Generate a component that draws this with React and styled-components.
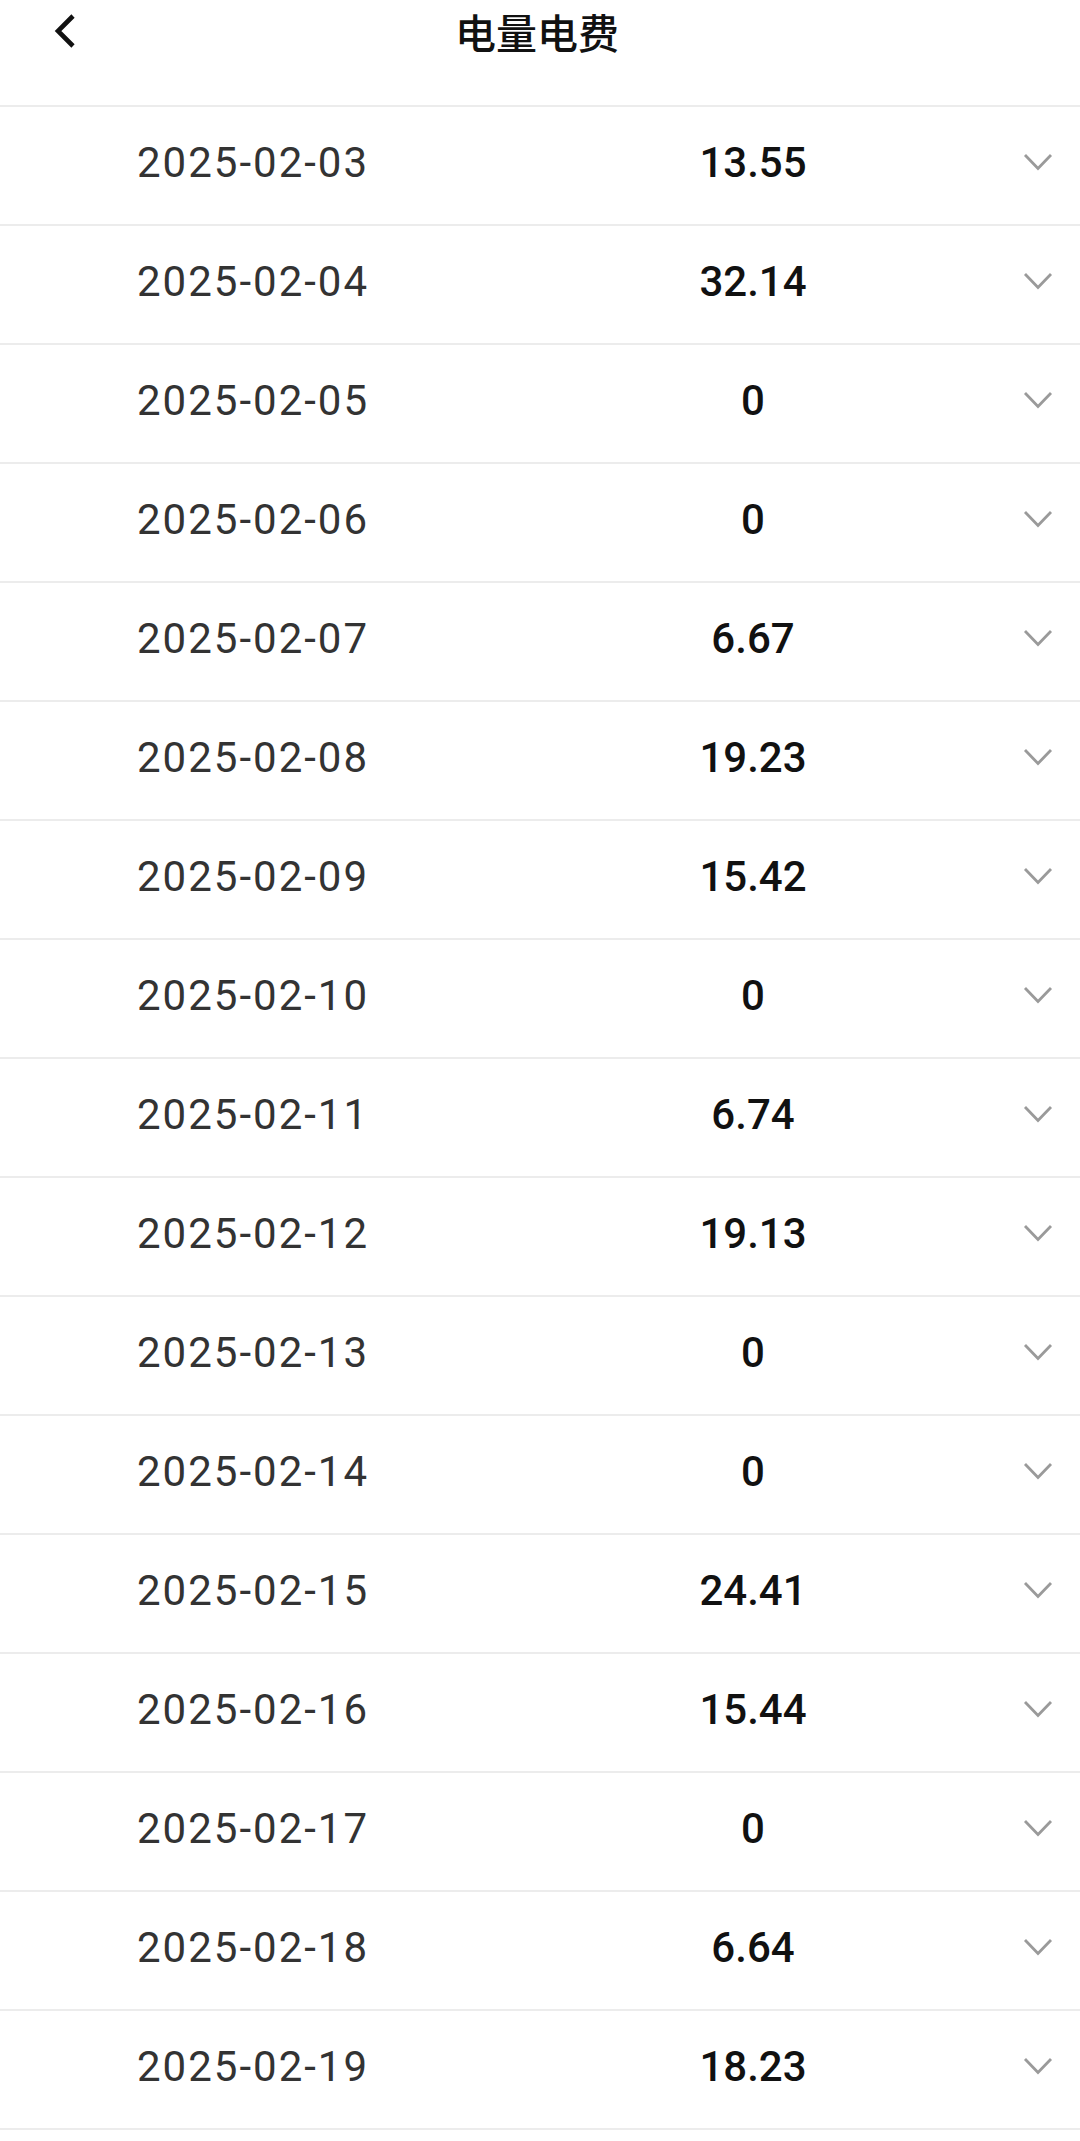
import React from "react";
import styled, { createGlobalStyle } from "styled-components";

const records = [
    { date: "2025-02-03", value: "13.55" },
    { date: "2025-02-04", value: "32.14" },
    { date: "2025-02-05", value: "0" },
    { date: "2025-02-06", value: "0" },
    { date: "2025-02-07", value: "6.67" },
    { date: "2025-02-08", value: "19.23" },
    { date: "2025-02-09", value: "15.42" },
    { date: "2025-02-10", value: "0" },
    { date: "2025-02-11", value: "6.74" },
    { date: "2025-02-12", value: "19.13" },
    { date: "2025-02-13", value: "0" },
    { date: "2025-02-14", value: "0" },
    { date: "2025-02-15", value: "24.41" },
    { date: "2025-02-16", value: "15.44" },
    { date: "2025-02-17", value: "0" },
    { date: "2025-02-18", value: "6.64" },
    { date: "2025-02-19", value: "18.23" },
];

const BackIcon = () => (
    <svg width="24" height="36" viewBox="0 0 24 36">
        <polyline points="20,3 5,18 20,33" fill="none" stroke="#111" strokeWidth="4.6" strokeLinejoin="miter" />
    </svg>
);

const ChevronDown = () => (
    <svg width="30" height="19" viewBox="0 0 30 19">
        <polyline points="2,2 15,15.5 28,2" fill="none" stroke="#9a9a9a" strokeWidth="2.8" />
    </svg>
);

const App = () => {
    return (
    <>
        <GlobalStyle />
        <Page>
            <Header>
                <NavBar>
                    <BackButton><BackIcon /></BackButton>
                    <Title>电量电费</Title>
                </NavBar>
            </Header>
            <List>
                {records.map((r) => (
                    <Row key={r.date}>
                        <DateText>{r.date}</DateText>
                        <Value>{r.value}</Value>
                        <Toggle><ChevronDown /></Toggle>
                    </Row>
                ))}
            </List>
        </Page>
    </>
    )
};

const GlobalStyle = createGlobalStyle`
    html, body {
    margin: 0;
    padding: 0;
    background: #ffffff;
    }
    * {
    box-sizing: border-box;
    }
`;
const Page = styled.div`
    width: 1080px;
    min-height: 2141px;
    background: #ffffff;
    font-family: Roboto, "Noto Sans", "Noto Sans CJK SC", sans-serif;
    overflow: hidden;
`;
const Header = styled.header`
    height: 107px;
    border-bottom: 2px solid #ececec;
`;
const NavBar = styled.div`
    position: relative;
    height: 62px;
    display: flex;
    align-items: center;
    justify-content: center;
    padding-right: 6px;
`;
const BackButton = styled.div`
    position: absolute;
    left: 53px;
    top: 13px;
    display: flex;
`;
const Title = styled.h1`
    margin: 0;
    font-family: "Noto Sans CJK SC", "Noto Sans", sans-serif;
    font-size: 41px;
    font-weight: 500;
    color: #111111;
    line-height: 1;
`;
const List = styled.ul`
    margin: 0;
    padding: 0;
    list-style: none;
`;
const Row = styled.li`
    height: 119px;
    border-bottom: 2px solid #ececec;
    display: grid;
    grid-template-columns: 398px 436px 1fr;
    align-items: center;
    padding: 0 27px 6px 137px;
`;
const DateText = styled.span`
    font-size: 42px;
    font-weight: 400;
    color: #333333;
    letter-spacing: 2px;
`;
const Value = styled.span`
    font-size: 42px;
    font-weight: 500;
    color: #111111;
    text-align: center;
`;
const Toggle = styled.span`
    justify-self: end;
    display: flex;
`;

export default App;
